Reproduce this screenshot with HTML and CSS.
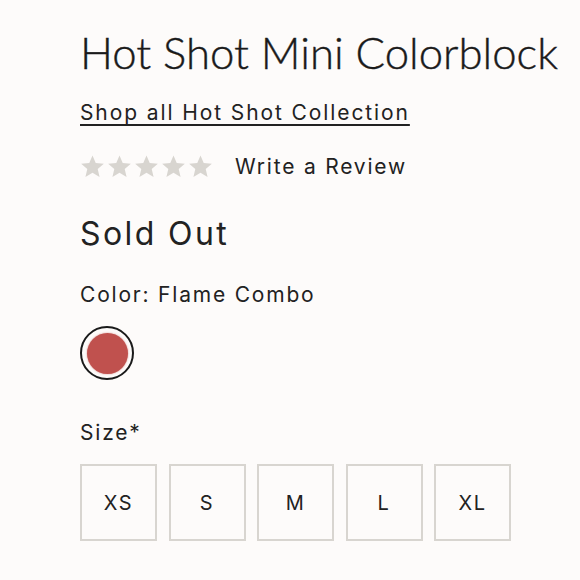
FILE: index.html
```html
<!DOCTYPE html>
<html>
<head>
<meta charset="utf-8">
<link rel="stylesheet" href="styles.css">
</head>
<body>
<main class="product">
  <h1 class="title">Hot Shot Mini Colorblock</h1>
  <a class="collection" href="#">Shop all Hot Shot Collection</a>
  <div class="rating">
    <div class="stars">
      <svg viewBox="0 0 24 24" class="star"><path d="M12 1.5l3.1 7.2 7.8.7-5.9 5.1 1.8 7.6L12 18.1l-6.8 4 1.8-7.6-5.9-5.1 7.8-.7z"/></svg>
      <svg viewBox="0 0 24 24" class="star"><path d="M12 1.5l3.1 7.2 7.8.7-5.9 5.1 1.8 7.6L12 18.1l-6.8 4 1.8-7.6-5.9-5.1 7.8-.7z"/></svg>
      <svg viewBox="0 0 24 24" class="star"><path d="M12 1.5l3.1 7.2 7.8.7-5.9 5.1 1.8 7.6L12 18.1l-6.8 4 1.8-7.6-5.9-5.1 7.8-.7z"/></svg>
      <svg viewBox="0 0 24 24" class="star"><path d="M12 1.5l3.1 7.2 7.8.7-5.9 5.1 1.8 7.6L12 18.1l-6.8 4 1.8-7.6-5.9-5.1 7.8-.7z"/></svg>
      <svg viewBox="0 0 24 24" class="star"><path d="M12 1.5l3.1 7.2 7.8.7-5.9 5.1 1.8 7.6L12 18.1l-6.8 4 1.8-7.6-5.9-5.1 7.8-.7z"/></svg>
    </div>
    <span class="review">Write a Review</span>
  </div>
  <div class="price">Sold Out</div>
  <div class="label color-label">Color: Flame Combo</div>
  <div class="swatch"><span class="swatch-fill"></span></div>
  <div class="label size-label">Size*</div>
  <div class="sizes">
    <span class="size">XS</span>
    <span class="size">S</span>
    <span class="size">M</span>
    <span class="size">L</span>
    <span class="size">XL</span>
  </div>
</main>
</body>
</html>
```

FILE: styles.css
```css
html, body {
  margin: 0;
  padding: 0;
  background: #fdfbfa;
}
body {
  font-family: "Inter", "Open Sans", sans-serif;
  color: #222;
}
.product {
  padding: 22px 0 0 80px;
  display: flex;
  flex-direction: column;
  align-items: flex-start;
}
.title {
  margin: 0;
  font-family: "Lato", sans-serif;
  font-weight: 300;
  font-size: 43.7px;
  line-height: 60px;
  white-space: nowrap;
  color: #1a1a1a;
  -webkit-text-stroke: 0.4px #1a1a1a;
}
.collection {
  margin-top: 18px;
  font-size: 21px;
  line-height: 26px;
  letter-spacing: 1.9px;
  color: #222;
  text-decoration: underline;
  text-decoration-thickness: 2px;
  text-underline-offset: 4px;
}
.rating {
  margin-top: 28px;
  display: flex;
  align-items: center;
  gap: 22px;
}
.stars {
  display: flex;
  gap: 2px;
}
.star {
  width: 25px;
  height: 25px;
  fill: #d8d5d0;
}
.review {
  font-size: 21px;
  letter-spacing: 1.8px;
}
.price {
  margin-top: 35px;
  font-size: 32px;
  line-height: 40px;
  letter-spacing: 2.4px;
}
.label {
  font-size: 21px;
  line-height: 26px;
  letter-spacing: 1.8px;
}
.color-label {
  margin-top: 28px;
}
.swatch {
  margin-top: 18px;
  width: 50px;
  height: 50px;
  border: 2px solid #1a1a1a;
  border-radius: 50%;
  display: flex;
  align-items: center;
  justify-content: center;
}
.swatch-fill {
  width: 41px;
  height: 41px;
  border-radius: 50%;
  background: #c0514e;
  box-shadow: 0 0 2px #d9908c;
}
.size-label {
  margin-top: 40px;
}
.sizes {
  margin-top: 18px;
  display: flex;
  gap: 11.5px;
}
.size {
  width: 73px;
  height: 73px;
  border: 2px solid #d8d5d0;
  display: flex;
  align-items: center;
  justify-content: center;
  font-size: 20px;
  letter-spacing: 1.5px;
}
```
